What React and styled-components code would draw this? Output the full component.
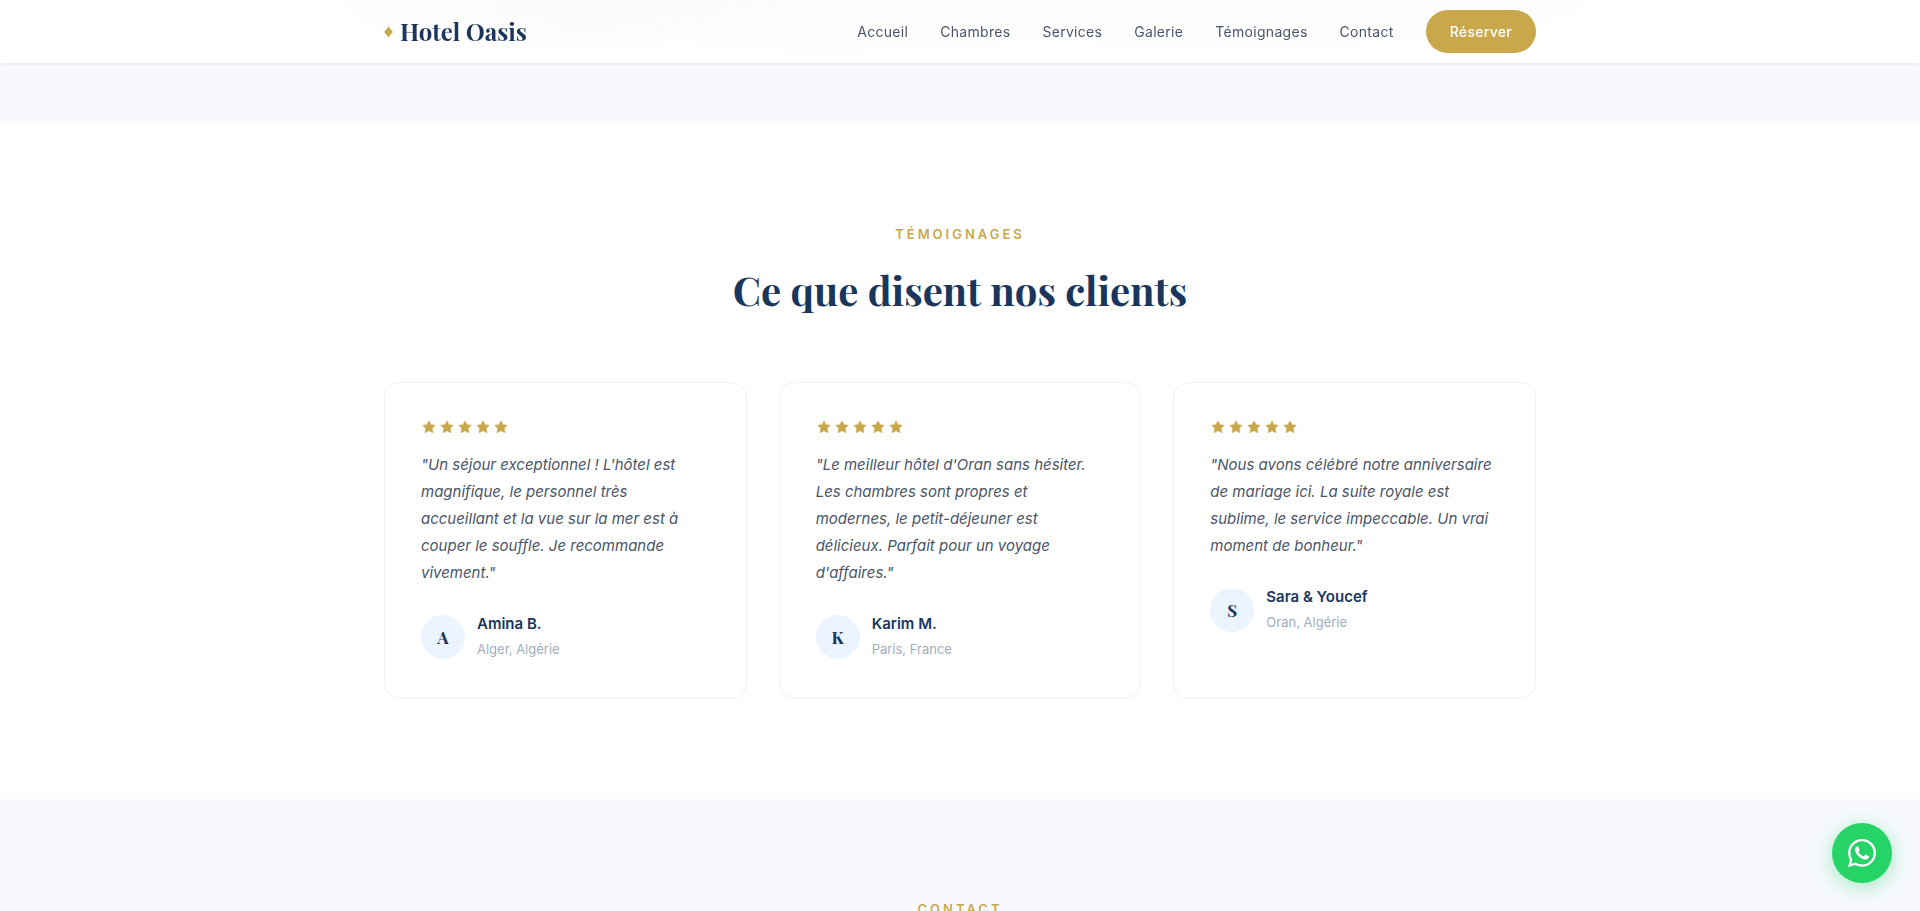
import React from "react";
import styled, { createGlobalStyle } from "styled-components";
import { FaWhatsapp } from "react-icons/fa";

const serif = `"Playfair Display", "Liberation Serif", serif`;
const navy = "#1a365d";
const gold = "#c9a84c";

const GlobalStyle = createGlobalStyle`
  * {
    box-sizing: border-box;
    margin: 0;
    padding: 0;
  }

  body {
    font-family: Inter, sans-serif;
    color: #2d3748;
    background: #fff;
  }
`;

const Page = styled.div`
  height: 100vh;
  overflow: hidden;
`;

const Container = styled.div`
  width: 100%;
  max-width: 1200px;
  margin: 0 auto;
  padding: 0 24px;
`;

const Header = styled.header`
  position: sticky;
  top: 0;
  z-index: 10;
  background: radial-gradient(
      ellipse 240px 60px at 29% 0,
      rgba(0, 0, 0, 0.02),
      transparent
    ),
    radial-gradient(
      ellipse 360px 60px at 43% 0,
      rgba(120, 110, 60, 0.025),
      transparent
    ),
    radial-gradient(
      ellipse 440px 60px at 64% 0,
      rgba(0, 60, 60, 0.012),
      transparent
    ),
    #fff;
  box-shadow: 0 1px 3px rgba(0, 0, 0, 0.08);
`;

const HeaderInner = styled(Container)`
  display: flex;
  align-items: center;
  justify-content: space-between;
  padding-top: 10px;
  padding-bottom: 10px;
`;

const Logo = styled.a`
  display: flex;
  align-items: center;
  gap: 7px;
  padding-bottom: 2px;
  font-family: ${serif};
  font-size: 24px;
  font-weight: 700;
  line-height: 32px;
  color: ${navy};
  text-decoration: none;
`;

const Nav = styled.nav`
  display: flex;
  align-items: center;
  gap: 32px;
`;

const NavLink = styled.a`
  font-size: 14px;
  letter-spacing: 0.3px;
  line-height: 24px;
  color: #4a5568;
  text-decoration: none;
`;

const BookLink = styled(NavLink)`
  padding: 10px 24px;
  line-height: 23px;
  font-weight: 500;
  color: #fff;
  background: ${gold};
  border-radius: 50px;
`;

const PreviousSection = styled.div`
  height: 61px;
  background: #f7f9fd;
`;

const Section = styled.section`
  padding: 100px 0;
  background: ${props => (props.$tinted ? "#f7f9fd" : "#fff")};
`;

const SectionLabel = styled.p`
  font-size: 13px;
  font-weight: 600;
  line-height: 20px;
  letter-spacing: 3px;
  text-align: center;
  text-transform: uppercase;
  color: ${gold};
`;

const SectionTitle = styled.h2`
  margin: 14px 0 60px;
  font-family: ${serif};
  font-size: 40px;
  font-weight: 700;
  line-height: 64px;
  text-align: center;
  color: ${navy};
`;

const Grid = styled.div`
  display: grid;
  grid-template-columns: repeat(auto-fit, minmax(300px, 1fr));
  gap: 32px;
`;

const Card = styled.article`
  padding: 36px;
  background: #fff;
  border: 1px solid #edf0f5;
  border-radius: 16px;
`;

const Stars = styled.div`
  display: flex;
  gap: 2px;
  margin-bottom: 16px;
  color: ${gold};
`;

const Quote = styled.p`
  margin-bottom: 26px;
  padding-right: 4px;
  font-size: 15px;
  font-style: italic;
  line-height: 27px;
  color: #4a5568;
`;

const Author = styled.div`
  display: flex;
  align-items: center;
  gap: 12px;
`;

const Avatar = styled.div`
  display: flex;
  align-items: center;
  justify-content: center;
  width: 44px;
  height: 44px;
  border-radius: 50%;
  background: #ebf4ff;
  font-family: ${serif};
  font-size: 17px;
  font-weight: 700;
  color: ${navy};
`;

const AuthorName = styled.h4`
  font-size: 15px;
  font-weight: 600;
  line-height: 24px;
  color: ${navy};
`;

const AuthorPlace = styled.p`
  font-size: 13px;
  line-height: 26px;
  color: #a0aec0;
`;

const WhatsappLink = styled.a`
  position: fixed;
  right: 28px;
  bottom: 28px;
  z-index: 20;
  display: flex;
  align-items: center;
  justify-content: center;
  width: 60px;
  height: 60px;
  border-radius: 50%;
  background: #25d366;
  box-shadow: 0 4px 20px rgba(37, 211, 102, 0.4);
  color: #fff;
  font-size: 32px;
`;

const links = [
  "Accueil",
  "Chambres",
  "Services",
  "Galerie",
  "Témoignages",
  "Contact"
];

const testimonials = [
  {
    name: "Amina B.",
    place: "Alger, Algérie",
    text:
      "Un séjour exceptionnel ! L'hôtel est magnifique, le personnel très accueillant et la vue sur la mer est à couper le souffle. Je recommande vivement."
  },
  {
    name: "Karim M.",
    place: "Paris, France",
    text:
      "Le meilleur hôtel d'Oran sans hésiter. Les chambres sont propres et modernes, le petit-déjeuner est délicieux. Parfait pour un voyage d'affaires."
  },
  {
    name: "Sara & Youcef",
    place: "Oran, Algérie",
    text:
      "Nous avons célébré notre anniversaire de mariage ici. La suite royale est sublime, le service impeccable. Un vrai moment de bonheur."
  }
];

const Star = () => (
  <svg width="16" height="16" viewBox="0 0 16 16" aria-hidden="true">
    <path
      d="M8 1.9 10 5.8 14.2 6.3 11.2 9.3 12 13.7 8 11.7 4 13.7 4.8 9.3 1.8 6.3 6 5.8Z"
      fill="currentColor"
      stroke="currentColor"
      strokeWidth="0.6"
      strokeLinejoin="round"
    />
  </svg>
);

const Diamond = () => (
  <svg width="9" height="15" viewBox="0 0 9 15" aria-hidden="true">
    <path
      d="M4.5 3.2Q6.4 6.6 8.9 9 6.4 11.4 4.5 14.8 2.6 11.4 0.1 9 2.6 6.6 4.5 3.2Z"
      fill={gold}
    />
  </svg>
);

const Testimonial = ({ name, place, text }) => (
  <Card>
    <Stars role="img" aria-label="5 étoiles">
      {[1, 2, 3, 4, 5].map(n => (
        <Star key={n} />
      ))}
    </Stars>
    <Quote>{`"${text}"`}</Quote>
    <Author>
      <Avatar>{name[0]}</Avatar>
      <div>
        <AuthorName>{name}</AuthorName>
        <AuthorPlace>{place}</AuthorPlace>
      </div>
    </Author>
  </Card>
);

const App = () => (
  <Page>
    <GlobalStyle />
    <Header>
      <HeaderInner>
        <Logo href="#accueil">
          <Diamond />
          Hotel Oasis
        </Logo>
        <Nav>
          {links.map(link => (
            <NavLink key={link} href={`#${link.toLowerCase()}`}>
              {link}
            </NavLink>
          ))}
          <BookLink href="#contact">Réserver</BookLink>
        </Nav>
      </HeaderInner>
    </Header>
    <PreviousSection />
    <Section id="témoignages">
      <Container>
        <SectionLabel>Témoignages</SectionLabel>
        <SectionTitle>Ce que disent nos clients</SectionTitle>
        <Grid>
          {testimonials.map(item => (
            <Testimonial key={item.name} {...item} />
          ))}
        </Grid>
      </Container>
    </Section>
    <Section id="contact" $tinted>
      <Container>
        <SectionLabel>Contact</SectionLabel>
      </Container>
    </Section>
    <WhatsappLink href="#whatsapp" aria-label="WhatsApp">
      <FaWhatsapp />
    </WhatsappLink>
  </Page>
);

export default App;
